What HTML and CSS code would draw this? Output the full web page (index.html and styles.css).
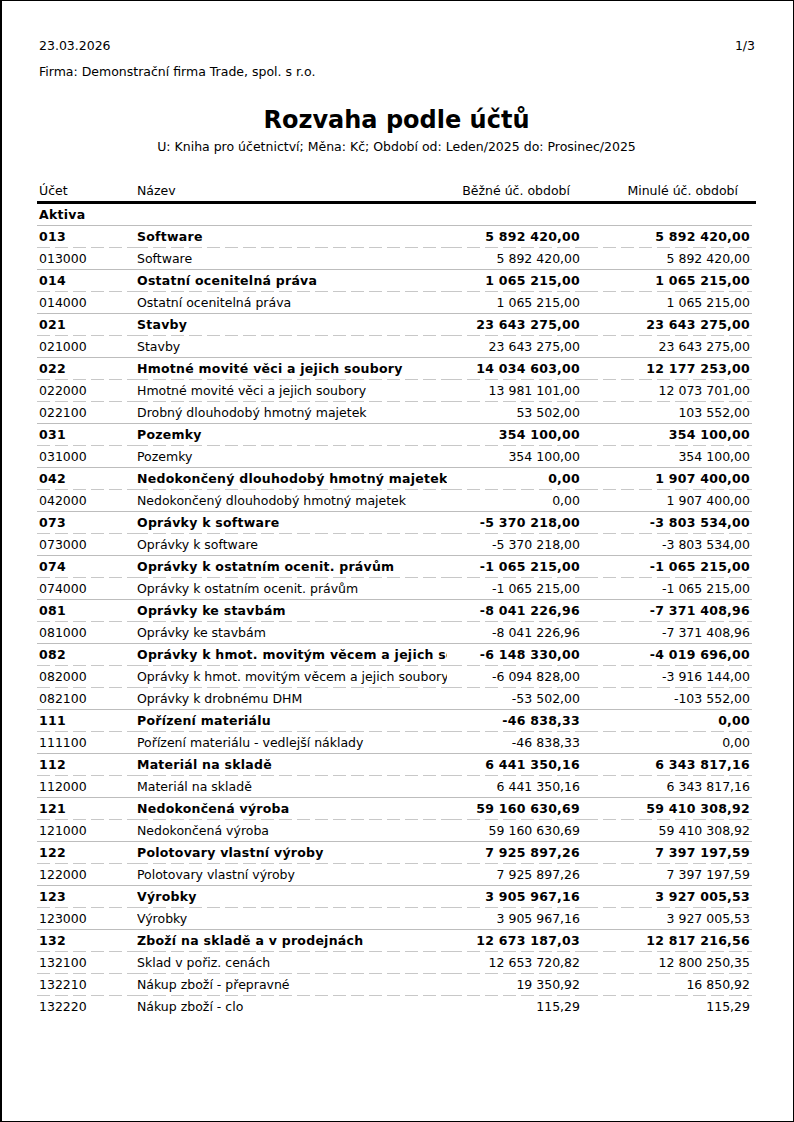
FILE: index.html
```html
<!DOCTYPE html>
<html lang="cs">
<head>
    <meta charset="UTF-8">
    <meta name="viewport" content="width=device-width, initial-scale=1.0">
    <title>Rozvaha podle účtů</title>
    <link rel="stylesheet" href="styles.css">
</head>
<body>
<div class="page">
    <div class="top-line">
        <span>23.03.2026</span>
        <span>1/3</span>
    </div>
    <div class="firm">Firma: Demonstrační firma Trade, spol. s r.o.</div>

    <h1 class="report-title">Rozvaha podle účtů</h1>
    <div class="report-sub">U: Kniha pro účetnictví; Měna: Kč; Období od: Leden/2025 do: Prosinec/2025</div>

    <table class="report">
        <colgroup>
            <col class="c-acc">
            <col class="c-name">
            <col class="c-cur">
            <col class="c-prev">
        </colgroup>
        <thead>
            <tr>
                <th class="t-acc">Účet</th>
                <th class="t-name">Název</th>
                <th class="t-cur">Běžné úč. období</th>
                <th class="t-prev">Minulé úč. období</th>
            </tr>
        </thead>
        <tbody>
            <tr class="section end"><td>Aktiva</td><td></td><td></td><td></td></tr>

            <tr class="sum"><td>013</td><td><div class="clip">Software</div></td><td>5 892 420,00</td><td>5 892 420,00</td></tr>
            <tr class="end"><td>013000</td><td><div class="clip">Software</div></td><td>5 892 420,00</td><td>5 892 420,00</td></tr>

            <tr class="sum"><td>014</td><td><div class="clip">Ostatní ocenitelná práva</div></td><td>1 065 215,00</td><td>1 065 215,00</td></tr>
            <tr class="end"><td>014000</td><td><div class="clip">Ostatní ocenitelná práva</div></td><td>1 065 215,00</td><td>1 065 215,00</td></tr>

            <tr class="sum"><td>021</td><td><div class="clip">Stavby</div></td><td>23 643 275,00</td><td>23 643 275,00</td></tr>
            <tr class="end"><td>021000</td><td><div class="clip">Stavby</div></td><td>23 643 275,00</td><td>23 643 275,00</td></tr>

            <tr class="sum"><td>022</td><td><div class="clip">Hmotné movité věci a jejich soubory</div></td><td>14 034 603,00</td><td>12 177 253,00</td></tr>
            <tr><td>022000</td><td><div class="clip">Hmotné movité věci a jejich soubory</div></td><td>13 981 101,00</td><td>12 073 701,00</td></tr>
            <tr class="end"><td>022100</td><td><div class="clip">Drobný dlouhodobý hmotný majetek</div></td><td>53 502,00</td><td>103 552,00</td></tr>

            <tr class="sum"><td>031</td><td><div class="clip">Pozemky</div></td><td>354 100,00</td><td>354 100,00</td></tr>
            <tr class="end"><td>031000</td><td><div class="clip">Pozemky</div></td><td>354 100,00</td><td>354 100,00</td></tr>

            <tr class="sum"><td>042</td><td><div class="clip">Nedokončený dlouhodobý hmotný majetek</div></td><td>0,00</td><td>1 907 400,00</td></tr>
            <tr class="end"><td>042000</td><td><div class="clip">Nedokončený dlouhodobý hmotný majetek</div></td><td>0,00</td><td>1 907 400,00</td></tr>

            <tr class="sum"><td>073</td><td><div class="clip">Oprávky k software</div></td><td>-5 370 218,00</td><td>-3 803 534,00</td></tr>
            <tr class="end"><td>073000</td><td><div class="clip">Oprávky k software</div></td><td>-5 370 218,00</td><td>-3 803 534,00</td></tr>

            <tr class="sum"><td>074</td><td><div class="clip">Oprávky k ostatním ocenit. právům</div></td><td>-1 065 215,00</td><td>-1 065 215,00</td></tr>
            <tr class="end"><td>074000</td><td><div class="clip">Oprávky k ostatním ocenit. právům</div></td><td>-1 065 215,00</td><td>-1 065 215,00</td></tr>

            <tr class="sum"><td>081</td><td><div class="clip">Oprávky ke stavbám</div></td><td>-8 041 226,96</td><td>-7 371 408,96</td></tr>
            <tr class="end"><td>081000</td><td><div class="clip">Oprávky ke stavbám</div></td><td>-8 041 226,96</td><td>-7 371 408,96</td></tr>

            <tr class="sum"><td>082</td><td><div class="clip">Oprávky k hmot. movitým věcem a jejich soubory</div></td><td>-6 148 330,00</td><td>-4 019 696,00</td></tr>
            <tr><td>082000</td><td><div class="clip">Oprávky k hmot. movitým věcem a jejich soubory</div></td><td>-6 094 828,00</td><td>-3 916 144,00</td></tr>
            <tr class="end"><td>082100</td><td><div class="clip">Oprávky k drobnému DHM</div></td><td>-53 502,00</td><td>-103 552,00</td></tr>

            <tr class="sum"><td>111</td><td><div class="clip">Pořízení materiálu</div></td><td>-46 838,33</td><td>0,00</td></tr>
            <tr class="end"><td>111100</td><td><div class="clip">Pořízení materiálu - vedlejší náklady</div></td><td>-46 838,33</td><td>0,00</td></tr>

            <tr class="sum"><td>112</td><td><div class="clip">Materiál na skladě</div></td><td>6 441 350,16</td><td>6 343 817,16</td></tr>
            <tr class="end"><td>112000</td><td><div class="clip">Materiál na skladě</div></td><td>6 441 350,16</td><td>6 343 817,16</td></tr>

            <tr class="sum"><td>121</td><td><div class="clip">Nedokončená výroba</div></td><td>59 160 630,69</td><td>59 410 308,92</td></tr>
            <tr class="end"><td>121000</td><td><div class="clip">Nedokončená výroba</div></td><td>59 160 630,69</td><td>59 410 308,92</td></tr>

            <tr class="sum"><td>122</td><td><div class="clip">Polotovary vlastní výroby</div></td><td>7 925 897,26</td><td>7 397 197,59</td></tr>
            <tr class="end"><td>122000</td><td><div class="clip">Polotovary vlastní výroby</div></td><td>7 925 897,26</td><td>7 397 197,59</td></tr>

            <tr class="sum"><td>123</td><td><div class="clip">Výrobky</div></td><td>3 905 967,16</td><td>3 927 005,53</td></tr>
            <tr class="end"><td>123000</td><td><div class="clip">Výrobky</div></td><td>3 905 967,16</td><td>3 927 005,53</td></tr>

            <tr class="sum"><td>132</td><td><div class="clip">Zboží na skladě a v prodejnách</div></td><td>12 673 187,03</td><td>12 817 216,56</td></tr>
            <tr><td>132100</td><td><div class="clip">Sklad v pořiz. cenách</div></td><td>12 653 720,82</td><td>12 800 250,35</td></tr>
            <tr><td>132210</td><td><div class="clip">Nákup zboží - přepravné</div></td><td>19 350,92</td><td>16 850,92</td></tr>
            <tr class="last"><td>132220</td><td><div class="clip">Nákup zboží - clo</div></td><td>115,29</td><td>115,29</td></tr>
        </tbody>
    </table>
</div>
</body>
</html>
```

FILE: styles.css
```css
html, body {
    margin: 0;
    padding: 0;
}

body {
    font-family: "DejaVu Sans", Verdana, sans-serif;
    font-size: 12.5px;
    color: #000;
    background: #fff;
}

.page {
    box-sizing: border-box;
    width: 794px;
    height: 1122px;
    border: 1px solid #000;
    border-left-width: 2px;
    padding: 37px 37px 0 35px;
}

.top-line {
    display: flex;
    justify-content: space-between;
    line-height: 16px;
    padding: 0 1px 0 2px;
}

.firm {
    margin-top: 10px;
    line-height: 16px;
    padding-left: 2px;
}

.report-title {
    margin: 25px 0 0;
    text-align: center;
    font-size: 24px;
    line-height: 30px;
    font-weight: bold;
}

.report-sub {
    text-align: center;
    line-height: 16px;
    margin-top: 4px;
}

.report {
    margin-top: 28px;
    width: 719px;
    table-layout: fixed;
    border-collapse: separate;
    border-spacing: 0;
}

.c-acc { width: 98px; }
.c-name { width: 314px; }
.c-cur { width: 136px; }
.c-prev { width: 171px; }

.report th {
    font-weight: normal;
    text-align: left;
    line-height: 16px;
    padding: 0 2px 2px;
    border-bottom: 3px solid #000;
    white-space: nowrap;
}

.report th.t-cur { text-align: right; padding-right: 15px; }
.report th.t-prev { text-align: right; padding-right: 18px; }

.report td {
    height: 22px;
    padding: 0 2px;
    box-sizing: border-box;
    white-space: nowrap;
    line-height: 16px;
    background-image: repeating-linear-gradient(90deg, #c8c8c8 0 13px, transparent 13px 18px);
    background-size: 100% 1px;
    background-position: left bottom;
    background-repeat: no-repeat;
}

.report td:nth-child(3) { text-align: right; padding-right: 5px; }
.report td:nth-child(4) {
    text-align: right;
    padding-right: 6px;
    background-size: calc(100% - 4px) 1px;
}

.report tr.end td {
    background-image: linear-gradient(#bdbdbd, #bdbdbd);
}

.report tr.last td {
    background-image: none;
}

.report tr.sum td,
.report tr.section td {
    font-weight: bold;
    letter-spacing: 0.25px;
}

.clip {
    overflow: hidden;
    white-space: nowrap;
}
```
